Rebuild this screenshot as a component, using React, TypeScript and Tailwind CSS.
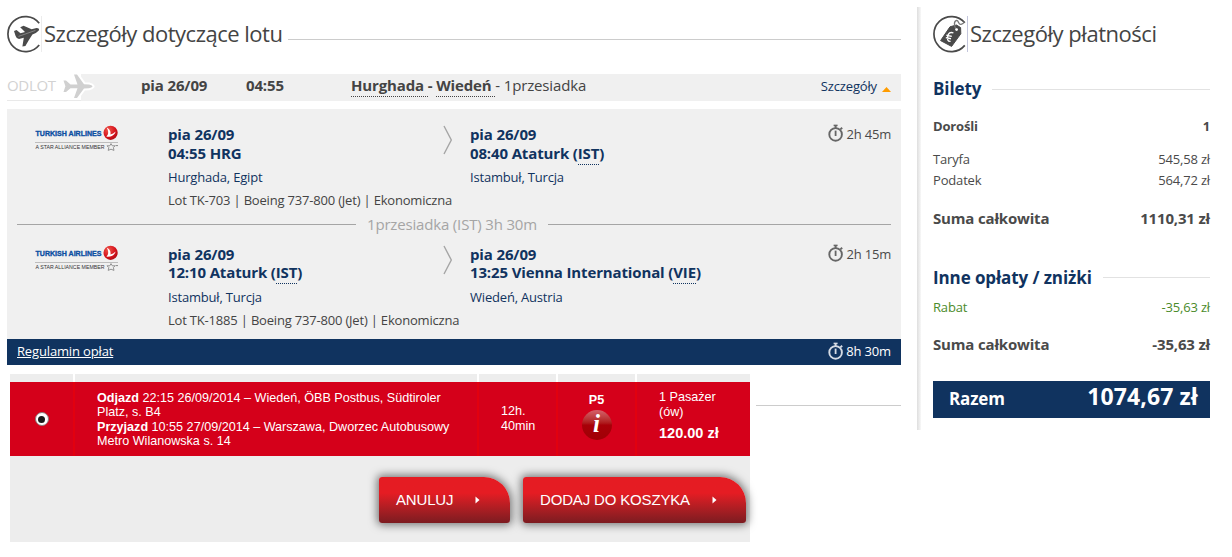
import { ReactNode } from "react";

type airport = {
  date: string;
  label: string;
  code?: string;
  city: string;
};

type segment = {
  from: airport;
  to: airport;
  flight: string;
  duration: string;
};

const SEGMENTS: segment[] = [
  {
    from: { date: "pia 26/09", label: "04:55 HRG", city: "Hurghada, Egipt" },
    to: {
      date: "pia 26/09",
      label: "08:40 Ataturk",
      code: "IST",
      city: "Istambuł, Turcja",
    },
    flight: "Lot TK-703 | Boeing 737-800 (Jet) | Ekonomiczna",
    duration: "2h 45m",
  },
  {
    from: {
      date: "pia 26/09",
      label: "12:10 Ataturk",
      code: "IST",
      city: "Istambuł, Turcja",
    },
    to: {
      date: "pia 26/09",
      label: "13:25 Vienna International",
      code: "VIE",
      city: "Wiedeń, Austria",
    },
    flight: "Lot TK-1885 | Boeing 737-800 (Jet) | Ekonomiczna",
    duration: "2h 15m",
  },
];

function FlightIcon() {
  return (
    <svg width="36" height="38" viewBox="0 0 36 38" className="shrink-0">
      <path
        d="M32.2 8.3 A17.5 17.5 0 1 0 32.2 29.9"
        fill="none"
        stroke="#4a4a4a"
        strokeWidth="1.7"
      />
      <path
        d="M7 16 L9.5 15 L13.5 18.2 L18 17 L13.2 12.2 L16.6 10.8 L24.6 14.2 L29.5 13 Q33 13.2 31.8 15.4 Q30 17.6 25.4 19.4 L21.6 25.6 L18.4 31 L15.4 31.6 L16.8 22.8 L12 24 Q9.6 24 8.6 21 Z"
        fill="#4a4a4a"
      />
      <path d="M11.5 21.4 L28.5 15.4" stroke="#8a8a8a" strokeWidth="0.9" />
      <path d="M34.5 1 V37" stroke="#ececec" strokeWidth="1" />
    </svg>
  );
}

function PriceIcon() {
  return (
    <svg width="36" height="38" viewBox="0 0 36 38" className="shrink-0">
      <path
        d="M31.8 7.8 A17.5 17.5 0 1 0 31.8 30.4"
        fill="none"
        stroke="#4a4a4a"
        strokeWidth="1.7"
      />
      <path
        d="M17 11.8 L23.5 10 L27.6 12.6 L27.8 18.8 L18.6 31.4 L7.6 25.6 Z"
        fill="#4a4a4a"
        stroke="#4a4a4a"
        strokeLinejoin="round"
      />
      <path
        d="M23.6 14.6 C20.6 11 20.8 6 23.6 5.4 C26 5.4 25.2 10 28 9.4 C30.4 9 31 7.6 31.4 6.6"
        fill="none"
        stroke="#777"
        strokeWidth="1.3"
      />
      <circle cx="23.6" cy="14.6" r="1.4" fill="#fff" />
      <path
        d="M20.4 18 C17.4 16.4 15.4 18.4 14.8 21 C14 24 14.6 26.6 17.6 26.4 M13.4 20.2 L18.8 21.4 M12.8 22.6 L18 23.8"
        fill="none"
        stroke="#fff"
        strokeWidth="1.4"
      />
      <path d="M34.5 1 V37" stroke="#c3c6dc" strokeWidth="1" />
    </svg>
  );
}

function PlaneIcon() {
  return (
    <svg width="36" height="32" viewBox="0 0 36 32" className="shrink-0">
      <path
        d="M3.5 10.5 L6 10.5 L10.5 14.4 L17.5 14.4 L14 4.5 L17 4.5 L24 14.2 L29 14.4 Q32 15 32.6 16.3 Q32 17.6 29 18.2 L24 18.4 L17 28 L14 28 L17.5 18.2 L10.5 18.2 L6 22 L3.5 22 L5.4 16.3 Z"
        fill="#d0d0d0"
        stroke="#fff"
        strokeWidth="4"
        strokeLinejoin="round"
        paintOrder="stroke"
      />
    </svg>
  );
}

function StopwatchIcon({ color }: { color: string }) {
  return (
    <svg
      width="16"
      height="18"
      viewBox="0 0 16 18"
      className="-mt-0.5 shrink-0"
    >
      <g fill="none" stroke={color}>
        <circle cx="7.6" cy="10.4" r="6.3" strokeWidth="1.9" />
        <path d="M5.6 1.4 H9.6" strokeWidth="1.5" />
        <path d="M7.6 1.4 V4.4" strokeWidth="2" />
        <path d="M12.4 5.4 L14.2 3.8" strokeWidth="1.9" />
        <path d="M7.6 6.6 V12" strokeWidth="1.8" />
      </g>
    </svg>
  );
}

function TurkishLogo() {
  return (
    <svg width="84" height="28" viewBox="0 0 84 28" className="shrink-0">
      <defs>
        <radialGradient id="ball" cx="0.35" cy="0.3" r="0.8">
          <stop offset="0" stopColor="#f0554a" />
          <stop offset="0.6" stopColor="#d6131c" />
          <stop offset="1" stopColor="#a80c14" />
        </radialGradient>
      </defs>
      <text
        x="0.5"
        y="10.6"
        fontSize="7.6"
        fontWeight="700"
        fill="#0b4ea2"
        stroke="#0b4ea2"
        strokeWidth="0.35"
        textLength="66"
        lengthAdjust="spacingAndGlyphs"
        fontFamily="Liberation Sans, sans-serif"
      >
        TURKISH AIRLINES
      </text>
      <circle cx="75.6" cy="7.8" r="7.1" fill="url(#ball)" />
      <path
        d="M71.6 2.6 C74.4 4 76.2 6.6 75.4 9.6 C77.4 8.6 79 8.2 80.6 6.4 C79.6 10 76.8 12 71 11.6 C73.6 10.4 74 6.4 71.6 2.6 Z"
        fill="#fff"
      />
      <path d="M0 17.5 H83" stroke="#bdbdbd" strokeWidth="1" />
      <text
        x="0.5"
        y="24"
        fontSize="5"
        fill="#333"
        textLength="69"
        lengthAdjust="spacingAndGlyphs"
        fontFamily="Liberation Sans, sans-serif"
      >
        A STAR ALLIANCE MEMBER
      </text>
      <path
        d="M76 18.6 L77.3 20.8 L80 20.8 L78.4 22.6 L79 25.4 L76 24.2 L73.2 25.4 L73.8 22.6 L72 20.8 L74.8 20.8 Z"
        fill="none"
        stroke="#888"
        strokeWidth="0.9"
      />
      <path d="M80.5 20.6 H83" stroke="#888" strokeWidth="1" />
    </svg>
  );
}

function Dotted({ children }: { children: ReactNode }) {
  return (
    <span className="border-b border-dotted border-current pb-px">
      {children}
    </span>
  );
}

function Airport({ place, tight }: { place: airport; tight: boolean }) {
  return (
    <div className="text-[#10335f] whitespace-nowrap">
      <div
        className={
          tight
            ? "mb-[5px] text-[15px] font-bold leading-[18px] tracking-[-0.14px]"
            : "mb-[3px] text-[15px] font-bold leading-[19px] tracking-[-0.14px]"
        }
      >
        <p>{place.date}</p>
        <p>
          {place.label}
          {place.code && (
            <>
              {" ("}
              <Dotted>{place.code}</Dotted>)
            </>
          )}
        </p>
      </div>
      <p className="text-[13px] leading-[23px] tracking-[-0.19px]">
        {place.city}
      </p>
    </div>
  );
}

function Segment({ item, tight }: { item: segment; tight: boolean }) {
  return (
    <div className="flex items-start pl-7 pr-2.5">
      <TurkishLogo />
      <div className="ml-[49px] w-[302px]">
        <div className="flex">
          <div className="w-[275px]">
            <Airport place={item.from} tight={tight} />
          </div>
          <svg width="10" height="30" viewBox="0 0 10 30">
            <path
              d="M1 1 L8.3 15 L1 29"
              fill="none"
              stroke="#a5a5a5"
              strokeWidth="1.4"
            />
          </svg>
        </div>
        <p className="text-[13px] leading-[23px] tracking-[-0.19px] text-[#444] whitespace-nowrap">
          {item.flight}
        </p>
      </div>
      <div className="flex-1">
        <Airport place={item.to} tight={tight} />
      </div>
      <div className="flex items-center gap-0.5 text-[13px] leading-[18px] tracking-[-0.19px] text-[#4a4a4a]">
        <StopwatchIcon color="#666" />
        {item.duration}
      </div>
    </div>
  );
}

function BusRow() {
  return (
    <div className="ml-[3px] mt-[9px] w-[740px] h-[168px] shrink-0 bg-[#ededed] text-white font-['Liberation_Sans',Arial,sans-serif]">
      <div className="flex h-2 gap-0.5 bg-white">
        <div className="w-[63px] bg-[#ededed]" />
        <div className="w-[402px] bg-[#ededed]" />
        <div className="w-[77px] bg-[#ededed]" />
        <div className="w-[77px] bg-[#ededed]" />
        <div className="flex-1 bg-[#ededed]" />
      </div>
      <div className="flex h-[74px] gap-0.5 bg-[#e2000f] text-[12.6px]">
        <div className="flex w-[63px] items-center justify-center bg-[#d5001a]">
          <span className="flex size-[14px] items-center justify-center rounded-full border border-[#8c7b7b] bg-white">
            <span className="size-[7px] rounded-full bg-[#1a1a1a]" />
          </span>
        </div>
        <div className="w-[402px] bg-[#d5001a] pl-[22px] pt-[9px] leading-[14.4px] whitespace-nowrap">
          <p>
            <b>Odjazd</b> 22:15 26/09/2014 – Wiedeń, ÖBB Postbus, Südtiroler
          </p>
          <p>Platz, s. B4</p>
          <p>
            <b>Przyjazd</b> 10:55 27/09/2014 – Warszawa, Dworzec Autobusowy
          </p>
          <p>Metro Wilanowska s. 14</p>
        </div>
        <div className="w-[77px] bg-[#d5001a] pl-[22px] pt-[22px] leading-[15px]">
          <p>12h.</p>
          <p>40min</p>
        </div>
        <div className="flex w-[77px] flex-col items-center bg-[#d5001a] pt-[11px] leading-[15px]">
          <b>P5</b>
          <span className="mt-0.5 flex size-[30px] items-center justify-center rounded-full bg-gradient-to-b from-[#d5606a] via-[#a80008] to-[#a00006] pb-0.5 font-['Liberation_Serif',serif] text-[25px] font-bold italic leading-[26px]">
            i
          </span>
        </div>
        <div className="flex-1 bg-[#d5001a] pl-[22px] pt-[8px] leading-[15px]">
          <p>1 Pasażer</p>
          <p>(ów)</p>
          <p className="mt-1 text-[14.5px] font-bold leading-[18px]">
            120.00 zł
          </p>
        </div>
      </div>
      <div className="flex justify-end gap-[13px] pr-1 pt-[21px] text-[15px] tracking-[-0.16px]">
        <button className="flex h-[46px] w-[131px] items-center rounded-[3px] rounded-tr-[26px] bg-gradient-to-b from-[#e51c23] from-35% to-[#7c1b20] pl-[17px] shadow-[0_0_8px_2px_rgba(0,0,0,0.5)]">
          ANULUJ
          <Arrow />
        </button>
        <button className="flex h-[46px] w-[223px] items-center rounded-[3px] rounded-tr-[26px] bg-gradient-to-b from-[#e51c23] from-35% to-[#7c1b20] pl-[17px] shadow-[0_0_8px_2px_rgba(0,0,0,0.5)]">
          DODAJ DO KOSZYKA
          <Arrow />
        </button>
      </div>
    </div>
  );
}

function Arrow() {
  return (
    <svg width="5" height="8" viewBox="0 0 5 8" className="ml-[22px]">
      <path d="M0.5 0.5 L4.5 4 L0.5 7.5 Z" fill="#fff" />
    </svg>
  );
}

function PriceRow({ name, value }: { name: string; value: string }) {
  return (
    <p className="flex justify-between">
      <span>{name}</span>
      <span>{value}</span>
    </p>
  );
}

function Payment() {
  return (
    <div className="w-[277px] text-[13px] leading-[21px] tracking-[-0.17px] text-[#4a4a4a]">
      <div className="mt-[15px] flex h-[38px] items-center">
        <PriceIcon />
        <h2 className="ml-px -mt-0.5 text-[22px] tracking-[-0.47px] text-[#444]">
          Szczegóły płatności
        </h2>
      </div>
      <div className="mt-[25px] flex h-5 items-center gap-[11px] text-[17px] font-bold tracking-[-0.1px] text-[#10335f]">
        Bilety
        <div className="mt-0.5 h-px flex-1 bg-[#e2e2e2]" />
      </div>
      <div className="mt-[18px] font-bold">
        <PriceRow name="Dorośli" value="1" />
      </div>
      <div className="mt-3">
        <PriceRow name="Taryfa" value="545,58 zł" />
        <PriceRow name="Podatek" value="564,72 zł" />
      </div>
      <div className="mt-[17px] text-[15px] font-bold">
        <PriceRow name="Suma całkowita" value="1110,31 zł" />
      </div>
      <div className="mt-[38px] flex h-5 items-center gap-[11px] text-[17px] font-bold tracking-[-0.1px] text-[#10335f]">
        Inne opłaty / zniżki
        <div className="h-px flex-1 bg-[#e2e2e2]" />
      </div>
      <div className="mt-[10px] text-[#4b8b2b]">
        <PriceRow name="Rabat" value="-35,63 zł" />
      </div>
      <div className="mt-4 text-[15px] font-bold">
        <PriceRow name="Suma całkowita" value="-35,63 zł" />
      </div>
      <div className="mt-[26px] flex h-[37px] items-baseline justify-between bg-[#10335f] pl-4 pr-3 font-bold text-white">
        <span className="text-[17px]">Razem</span>
        <span className="text-[23px] leading-[30px] tracking-[0.1px]">
          1074,67 zł
        </span>
      </div>
    </div>
  );
}

export default function App() {
  return (
    <div className="flex h-[557px] w-[1232px] overflow-hidden bg-white font-['Open_Sans',sans-serif]">
      <div className="ml-[7px] flex w-[894px] flex-col">
        <div className="mt-[15px] flex h-[38px] shrink-0 items-center text-[#444]">
          <FlightIcon />
          <h2 className="ml-px -mt-0.5 text-[22px] tracking-[-0.5px]">
            Szczegóły dotyczące lotu
          </h2>
          <div className="ml-[6px] mt-[11px] h-px flex-1 bg-[#ccc]" />
        </div>

        <div className="mt-[21px] flex h-[27px] shrink-0 text-[15px] leading-[23px] tracking-[-0.14px] text-[#444]">
          <div className="relative flex w-[74px] border-b border-[#e9e9e9] tracking-[-0.3px] text-[#d2d2d2]">
            ODLOT
            <span className="absolute left-[53px] -top-[4px]">
              <PlaneIcon />
            </span>
          </div>
          <div className="flex flex-1 bg-[#f0f0f0] pl-[60px] pr-2.5">
            <b className="w-[105px]">pia 26/09</b>
            <b className="w-[105px]">04:55</b>
            <p className="flex-1">
              <b>
                <Dotted>Hurghada </Dotted>- <Dotted>Wiedeń </Dotted>
              </b>
              - 1przesiadka
            </p>
            <p className="flex items-center gap-[5px] text-[13px] text-[#10335f]">
              <span className="-mt-0.5">Szczegóły</span>
              <svg width="9" height="5" viewBox="0 0 9 5" className="mt-[3px]">
                <path d="M0 5 L4.5 0 L9 5 Z" fill="#ff9c00" />
              </svg>
            </p>
          </div>
        </div>

        <div className="mt-2 h-[230px] shrink-0 bg-[#f0f0f0] pt-4">
          <Segment item={SEGMENTS[0]} tight={false} />
          <div className="mx-2.5 flex h-6 items-center gap-[11px] text-[15px] tracking-[-0.17px] text-[#a5a5a5]">
            <div className="h-px w-[339px] bg-[#a5a5a5]" />
            1przesiadka (IST) 3h 30m
            <div className="h-px flex-1 bg-[#a5a5a5]" />
          </div>
          <div className="mt-[9px]">
            <Segment item={SEGMENTS[1]} tight={true} />
          </div>
        </div>

        <div className="flex h-[26px] shrink-0 items-center justify-between bg-[#10335f] px-2.5 text-[13px] tracking-[-0.15px] text-white">
          <a className="underline">Regulamin opłat</a>
          <div className="flex items-center gap-0.5">
            <StopwatchIcon color="#d5dbe4" />
            8h 30m
          </div>
        </div>

        <div className="flex">
          <BusRow />
          <div className="ml-1.5 mt-10 h-px flex-1 bg-[#ccc]" />
        </div>
      </div>

      <div className="ml-4 mr-3 mt-[7px] h-[423px] w-1 bg-gradient-to-r from-[#dedede] to-[#f8f8f8]" />

      <Payment />
    </div>
  );
}
